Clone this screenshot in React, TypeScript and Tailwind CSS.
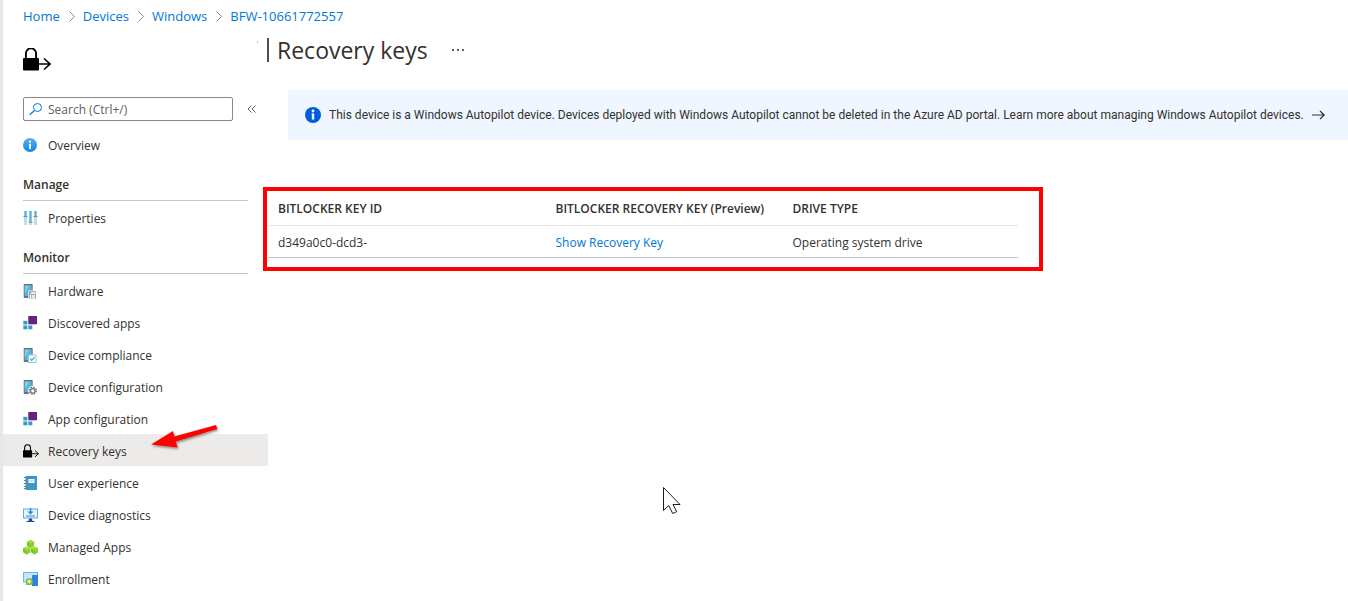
import type { ReactNode } from 'react';

function InfoIcon() {
  return (
    <svg className="size-4 shrink-0" viewBox="0 0 16 16" aria-hidden="true">
      <defs>
        <linearGradient id="info" x1="0" y1="0" x2="0" y2="1">
          <stop offset="0" stopColor="#5ab0f2" />
          <stop offset="1" stopColor="#1484dc" />
        </linearGradient>
      </defs>
      <circle cx="7" cy="7" r="7" fill="url(#info)" />
      <rect x="6.100" y="5.700" width="1.800" height="5.400" fill="#fff" />
      <circle cx="7" cy="3.700" r="1.100" fill="#fff" />
    </svg>
  );
}

function SlidersIcon() {
  return (
    <svg className="size-4 shrink-0" viewBox="0 0 16 16" aria-hidden="true">
      {[1, 6, 11].map((x) => (
        <rect key={x} x={x} y="0" width="3" height="14" fill="#b9def0" />
      ))}
      <rect x="1.500" y="0" width="2" height="5" fill="#59b4d9" />
      <rect x="6.500" y="0" width="2" height="10.500" fill="#59b4d9" />
      <rect x="11.500" y="0" width="2" height="5" fill="#59b4d9" />
      <rect x="0.500" y="5" width="4" height="1" fill="#7b8a92" />
      <rect x="5.500" y="10.500" width="4" height="1.200" fill="#7b8a92" />
      <rect x="10.500" y="5" width="4" height="1" fill="#7b8a92" />
    </svg>
  );
}

function Phone({ children }: { children: ReactNode }) {
  return (
    <svg className="size-4 shrink-0" viewBox="0 0 16 16" aria-hidden="true">
      <rect x="0.700" y="0" width="9" height="14" rx="0.900" fill="#67747c" />
      <rect x="1.700" y="1.500" width="7" height="10.500" fill="#59b4d9" />
      <path d="M1.700 1.500h5L1.700 9.500z" fill="#7fcae8" />
      {children}
    </svg>
  );
}

function HardwareIcon() {
  return (
    <Phone>
      <rect x="5" y="6.500" width="9" height="9" fill="#fff" />
      <rect x="5.500" y="7" width="7.500" height="7.500" fill="#a3abb0" />
      <rect x="8" y="8" width="4.500" height="2" fill="#e9eef0" />
      <rect x="7" y="10.500" width="1" height="4" fill="#fff" />
      <rect x="9" y="11" width="3" height="3" fill="#ececec" />
    </Phone>
  );
}

function ComplianceIcon() {
  return (
    <Phone>
      <rect x="5.500" y="7" width="7.500" height="7.500" fill="#fff" stroke="#8fcbe4" />
      <path d="M7.200 10.700l1.600 1.800L11.500 9" fill="none" stroke="#2a8fc4" strokeWidth="1.100" />
    </Phone>
  );
}

function GearIcon() {
  return (
    <Phone>
      <circle cx="9.800" cy="10.800" r="4.800" fill="#fff" />
      <circle cx="9.800" cy="10.800" r="3.400" fill="none" stroke="#74797c" strokeWidth="1.600" strokeDasharray="1.500 1.170" />
      <circle cx="9.800" cy="10.800" r="2.300" fill="none" stroke="#74797c" strokeWidth="1.300" />
    </Phone>
  );
}

function AppsIcon() {
  return (
    <svg className="size-4 shrink-0" viewBox="0 0 16 16" aria-hidden="true">
      <rect x="5.300" y="0" width="8.700" height="8.300" fill="#68217a" />
      <rect x="0.300" y="4.800" width="4" height="3.700" fill="#3999c6" />
      <rect x="0.300" y="9.500" width="4" height="3.800" fill="#3999c6" />
      <rect x="5.300" y="9.500" width="4" height="3.800" fill="#3999c6" />
    </svg>
  );
}

function LockIcon({ className }: { className: string }) {
  return (
    <svg className={className} viewBox="0 0 28 26" aria-hidden="true">
      <rect x="0" y="10" width="16" height="12.500" rx="1" fill="#000" />
      <path d="M2.900 11V5.500a5.100 5.100 0 0 1 10.200 0V11" fill="none" stroke="#000" strokeWidth="1.900" />
      <path d="M16 16h11M21 10.500l6 5.500-6 5.500" fill="none" stroke="#000" strokeWidth="1.600" />
    </svg>
  );
}

function NotebookIcon() {
  return (
    <svg className="size-4 shrink-0" viewBox="0 0 16 16" aria-hidden="true">
      <rect x="2.500" y="0" width="11.500" height="14" fill="#3999c6" />
      <rect x="5.500" y="3" width="6" height="4" fill="#fff" />
      <rect x="6.500" y="4.300" width="4" height="1.200" fill="#9ccfe5" />
      {[1, 4, 7, 10, 12].map((y) => (
        <rect key={y} x="0.800" y={y} width="3" height="1" fill="#7a7f83" />
      ))}
    </svg>
  );
}

function DiagnosticsIcon() {
  return (
    <svg className="size-4 shrink-0" viewBox="0 0 16 16" aria-hidden="true">
      <rect x="0.500" y="1" width="14" height="9" fill="#e4f3fc" stroke="#4fb0ec" />
      <path d="M7.500 0v5" stroke="#2e8ae0" strokeWidth="1.600" />
      <path d="M4.500 3.500h6l-3 3.200z" fill="#2e8ae0" />
      <rect x="3" y="7.500" width="9" height="1" fill="#6f7f8c" />
      <path d="M6 10.500h3l.5 2.500H11.500v1h-8v-1H5.500z" fill="#1d4f9c" />
    </svg>
  );
}

function CubesIcon() {
  return (
    <svg className="size-4 shrink-0" viewBox="0 0 16 16" aria-hidden="true">
      {['translate(3.900 0)', 'translate(0 6.400)', 'translate(7.800 6.400)'].map((t) => (
        <g key={t} transform={t}>
          <path d="M3.600 0L7.200 1.800v4L3.600 8 0 5.800v-4z" fill="#7cc42f" />
          <path d="M3.600 0L7.200 1.800 3.600 3.700 0 1.800z" fill="#a6e03a" />
          <path d="M3.600 3.700L7.200 1.800v4L3.600 8z" fill="#8fd02c" />
        </g>
      ))}
    </svg>
  );
}

function EnrollmentIcon() {
  return (
    <svg className="size-4 shrink-0" viewBox="0 0 16 16" aria-hidden="true">
      <rect x="0.500" y="0.500" width="14" height="9.500" fill="#c4e8fb" stroke="#6cb8e6" />
      <path d="M2.500 13l1-3h5v3z" fill="#a0aab2" />
      <rect x="9" y="3" width="6" height="11" rx="0.600" fill="#2e82de" />
      <circle cx="6.300" cy="9.500" r="3.500" fill="#86bd2c" />
      <path d="M6.300 7.500v4M4.300 9.500h4" stroke="#fff" strokeWidth="1.300" />
    </svg>
  );
}

type Item = { label: string; icon: ReactNode; selected?: boolean };

const monitorItems: Item[] = [
  { label: 'Hardware', icon: <HardwareIcon /> },
  { label: 'Discovered apps', icon: <AppsIcon /> },
  { label: 'Device compliance', icon: <ComplianceIcon /> },
  { label: 'Device configuration', icon: <GearIcon /> },
  { label: 'App configuration', icon: <AppsIcon /> },
  { label: 'Recovery keys', icon: <LockIcon className="size-4 shrink-0" />, selected: true },
  { label: 'User experience', icon: <NotebookIcon /> },
  { label: 'Device diagnostics', icon: <DiagnosticsIcon /> },
  { label: 'Managed Apps', icon: <CubesIcon /> },
  { label: 'Enrollment', icon: <EnrollmentIcon /> },
];

function NavItem({ label, icon, selected }: Item) {
  return (
    <li className="relative">
      <a
        href="#"
        aria-current={selected ? 'page' : undefined}
        className={selected ? 'flex h-8 items-center gap-[9px] bg-[#edebe9] pt-1 pl-5' : 'flex h-8 items-center gap-[9px] pt-1 pl-5'}
      >
        {icon}
        {label}
      </a>
      {selected && (
        <svg className="absolute -top-3 left-36 h-8 w-20" viewBox="0 0 80 32" aria-hidden="true">
          <defs>
            <filter id="arrow-shadow" x="-20%" y="-20%" width="140%" height="160%">
              <feDropShadow dx="1" dy="1.500" stdDeviation="1" floodOpacity="0.450" />
            </filter>
          </defs>
          <path d="M4 22.500L26 9l1.300 5.400L69 3l1.300 4L28.700 19.600l1.800 6z" fill="#f00" filter="url(#arrow-shadow)" />
        </svg>
      )}
    </li>
  );
}

function NavGroup({ title, items }: { title: string; items: Item[] }) {
  return (
    <section>
      <h2 className="mr-5 ml-5 flex h-[41px] items-center border-b border-[#c8c6c4] pt-2.5 font-semibold">{title}</h2>
      <ul>
        {items.map((item) => (
          <NavItem key={item.label} {...item} />
        ))}
      </ul>
    </section>
  );
}

const crumbs = ['Home', 'Devices', 'Windows', 'BFW-10661772557'];

export default function App() {
  return (
    <div className="relative min-h-screen overflow-hidden border-l-3 border-[#e8e8e8] bg-white font-['Open_Sans','Noto_Sans',sans-serif] text-xs leading-5 text-[#323130]">
      <nav aria-label="Breadcrumb" className="flex h-8 items-center gap-[9px] pl-5 text-[13px] text-[#0078d4]">
        {crumbs.map((crumb, i) => (
          <span key={crumb} className="flex items-center gap-2">
            {i > 0 && (
              <svg className="h-3 w-1.5" viewBox="0 0 6 12" fill="none" stroke="#8a8886" aria-hidden="true">
                <path d="M.5 1.500L5.500 6.500.5 11.500" />
              </svg>
            )}
            <a href="#">{crumb}</a>
          </span>
        ))}
      </nav>

      <header className="flex h-[58px] items-start pl-5">
        <LockIcon className="mt-4 h-[26px] w-7 shrink-0" />
        <span className="mt-[9px] ml-[206px] h-0.5 w-px bg-[#9cc3e8]" />
        <h1 className="ml-[9px] flex items-center gap-2 pt-0.5 text-[23px] leading-8">
          <span className="h-6 w-0.5 bg-[#44505c]" />
          Recovery keys
        </h1>
        <button type="button" aria-label="More actions" className="mt-[17px] ml-6 flex gap-[3px]">
          <span className="size-0.5 bg-[#605e5c]" />
          <span className="size-0.5 bg-[#605e5c]" />
          <span className="size-0.5 bg-[#605e5c]" />
        </button>
      </header>

      <div className="flex">
        <aside className="w-[265px] shrink-0 pt-[7px]">
          <div className="mb-[7px] flex items-center pl-5">
            <label className="flex h-6 w-[210px] items-center gap-[5px] rounded-xs border border-[#8a8886] pl-[5px]">
              <svg className="size-3.5 shrink-0" viewBox="0 0 14 14" fill="none" stroke="#0078d4" aria-hidden="true">
                <circle cx="8.500" cy="5.500" r="4" />
                <path d="M5.500 8.500L.7 12.800" strokeWidth="1.200" />
              </svg>
              <input aria-label="Search" placeholder="Search (Ctrl+/)" className="w-full min-w-0 bg-transparent pt-0.5 outline-none placeholder:text-[#605e5c]" />
            </label>
            <button type="button" aria-label="Collapse menu" className="ml-3.5">
              <svg className="h-2 w-[9px]" viewBox="0 0 9 8" fill="none" stroke="#605e5c" aria-hidden="true">
                <path d="M4.500.5L1 4l3.500 3.500M8.500.5L5 4l3.500 3.500" />
              </svg>
            </button>
          </div>
          <ul>
            <NavItem label="Overview" icon={<InfoIcon />} />
          </ul>
          <NavGroup title="Manage" items={[{ label: 'Properties', icon: <SlidersIcon /> }]} />
          <NavGroup title="Monitor" items={monitorItems} />
        </aside>

        <main className="min-w-0 flex-1">
          <a href="#" className="ml-5 flex min-h-[50px] items-center gap-2 bg-[#eff6ff] pl-[17px] font-[Roboto,'Open_Sans',sans-serif]">
            <svg className="size-4 shrink-0" viewBox="0 0 16 16" aria-hidden="true">
              <circle cx="8" cy="8" r="8" fill="#015cda" />
              <circle cx="8" cy="4" r="1.400" fill="#fff" />
              <path d="M6.500 6.500h2.700v6H6.800V7.500h-.3z" fill="#fff" />
            </svg>
            <span>
              This device is a Windows Autopilot device. Devices deployed with Windows Autopilot cannot be deleted in the Azure AD portal. Learn more about managing Windows Autopilot devices.
            </span>
            <svg className="h-3 w-3.5 shrink-0" viewBox="0 0 14 12" fill="none" stroke="#323130" strokeWidth="1.200" aria-hidden="true">
              <path d="M0 6h12M8 2l4.200 4L8 10" />
            </svg>
          </a>

          <div className="relative mt-[51px] max-w-[750px]">
            <table className="w-full table-fixed text-left">
              <colgroup>
                <col className="w-[37%]" />
                <col className="w-[31.6%]" />
                <col />
              </colgroup>
              <thead>
                <tr className="h-[34px] border-b border-[#e6e6e6]">
                  <th className="pt-0.5 pl-2.5 font-semibold whitespace-nowrap">BITLOCKER KEY ID</th>
                  <th className="pt-0.5 pl-2.5 font-semibold whitespace-nowrap">BITLOCKER RECOVERY KEY (Preview)</th>
                  <th className="pt-0.5 pl-2.5 font-semibold whitespace-nowrap">DRIVE TYPE</th>
                </tr>
              </thead>
              <tbody>
                <tr className="h-8 border-b border-[#c8c6c4]">
                  <td className="pt-1 pl-2.5">d349a0c0-dcd3-</td>
                  <td className="pt-1 pl-2.5">
                    <a href="#" className="text-[#0078d4]">Show Recovery Key</a>
                  </td>
                  <td className="pt-1 pl-2.5">Operating system drive</td>
                </tr>
              </tbody>
            </table>
            <div className="pointer-events-none absolute -top-1 -right-[25px] -bottom-[13px] -left-[5px] border-4 border-[#f00]" />
          </div>
        </main>
      </div>

      <svg className="pointer-events-none absolute top-[486px] left-[659px] h-7 w-5" viewBox="0 0 20 28" aria-hidden="true">
        <path d="M1.500 1.500v23l5.200-5 4 8 4-1.800-3.700-7.200h7z" fill="#fff" stroke="#1b1b28" />
      </svg>
    </div>
  );
}
